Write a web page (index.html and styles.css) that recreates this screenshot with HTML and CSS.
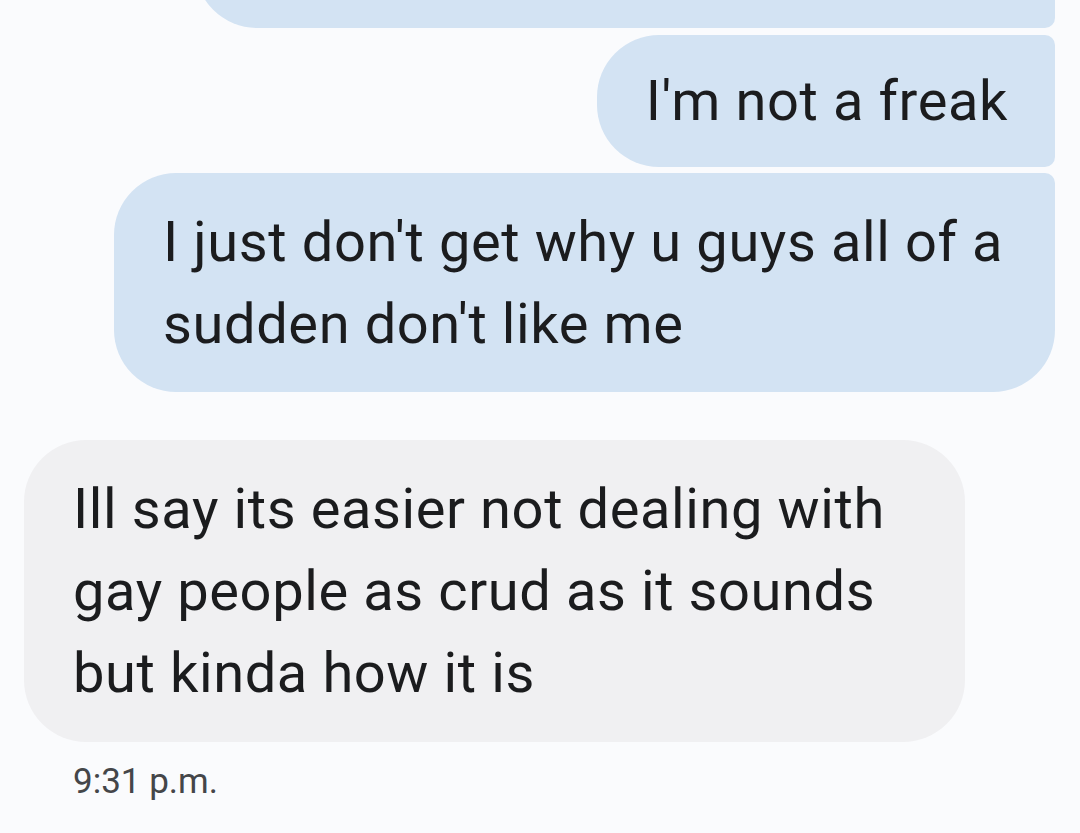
FILE: index.html
```html
<!DOCTYPE html>
<html lang="en">
<head>
<meta charset="utf-8">
<title>Messages</title>
<link rel="stylesheet" href="styles.css">
</head>
<body>
<main class="thread">
  <div class="row out">
    <div class="bubble sent first"><span class="hidden-line">&nbsp;</span></div>
  </div>
  <div class="row out">
    <div class="bubble sent middle">I'm not a freak</div>
  </div>
  <div class="row out">
    <div class="bubble sent last">I just don't get why u guys all of a sudden don't like me</div>
  </div>
  <div class="row in">
    <div class="bubble received">Ill say its easier not dealing with gay people as crud as it sounds but kinda how it is</div>
  </div>
  <div class="time">9:31 p.m.</div>
</main>
</body>
</html>
```
FILE: styles.css
```css
html, body {
  margin: 0;
  padding: 0;
  background: #fafbfd;
}
body {
  font-family: Roboto, "Noto Sans", sans-serif;
  color: #1b1c1e;
  overflow: hidden;
  height: 833px;
}
.thread {
  display: flex;
  flex-direction: column;
  padding: 0 25px 0 24px;
  margin-top: -100px;
}
.row {
  display: flex;
}
.row.out {
  justify-content: flex-end;
  margin-bottom: 6px;
}
.row.out:first-child {
  margin-bottom: 7px;
}
.row.in {
  justify-content: flex-start;
  margin-top: 42px;
}
.bubble {
  max-width: 941px;
  box-sizing: border-box;
  font-size: 56px;
  letter-spacing: 0.6px;
  line-height: 82px;
  padding: 25px 47px 25px 49px;
}
.sent {
  background: #d3e3f3;
}
.sent.first {
  width: 860px;
  height: 128px;
  border-radius: 62px 10px 10px 62px;
}
.sent.middle {
  border-radius: 62px 10px 10px 62px;
}
.sent.last {
  border-radius: 62px 10px 62px 62px;
  padding-top: 28px;
  padding-bottom: 27px;
}
.received {
  background: #f0f0f2;
  border-radius: 62px;
  padding-top: 28px;
  padding-bottom: 28px;
}
.time {
  font-size: 35px;
  color: #444649;
  padding-left: 49px;
  margin-top: 18px;
  line-height: 44px;
}
```
